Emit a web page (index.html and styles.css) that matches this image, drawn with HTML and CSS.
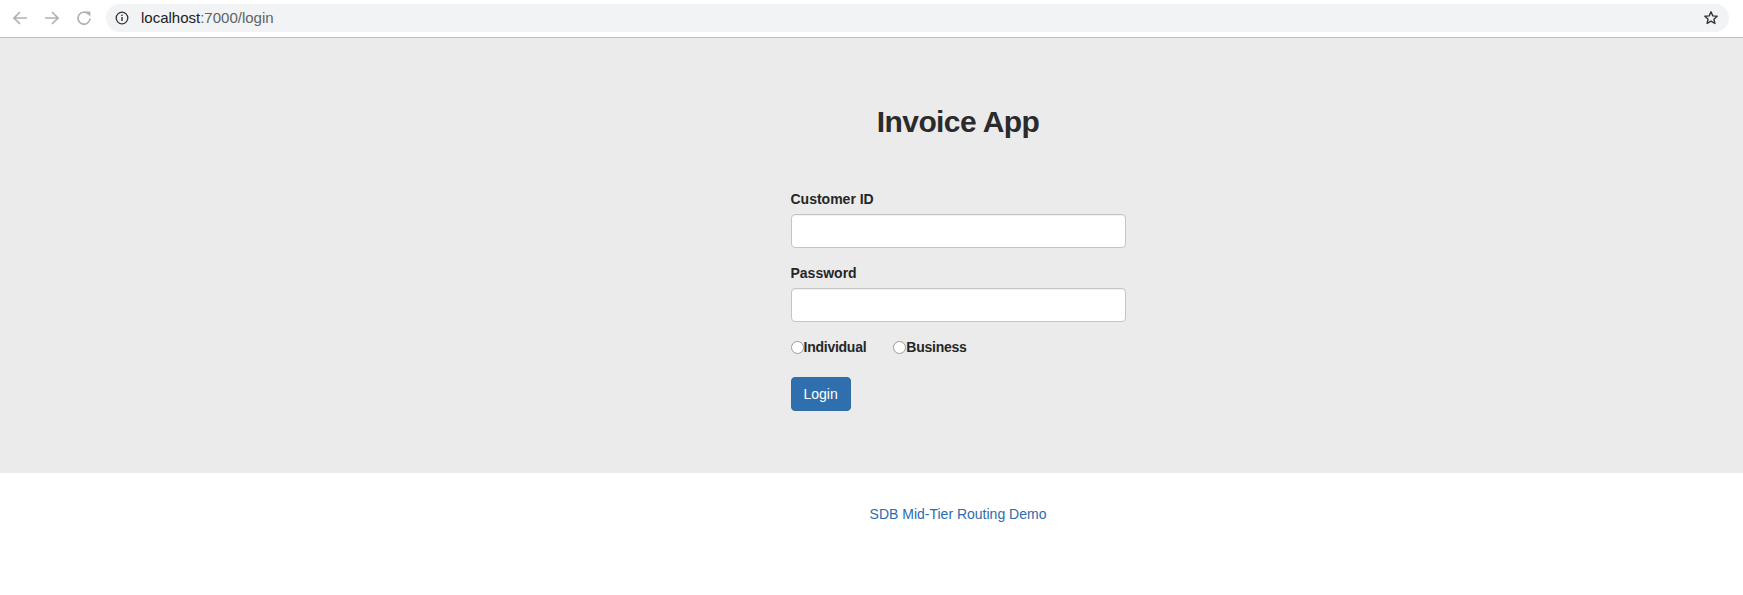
FILE: index.html
```html
<!DOCTYPE html>
<html lang="en">
<head>
<meta charset="utf-8">
<title>Invoice App</title>
<link rel="stylesheet" href="styles.css">
</head>
<body>
<div class="chrome">
  <div class="nav">
    <svg class="nav-icon" width="16" height="16" viewBox="0 0 16 16"><path d="M15 8H2M8 2L2 8l6 6" fill="none" stroke="#aeb1b4" stroke-width="1.7"/></svg>
    <svg class="nav-icon" width="16" height="16" viewBox="0 0 16 16"><path d="M1 8h13M8 2l6 6-6 6" fill="none" stroke="#aeb1b4" stroke-width="1.7"/></svg>
    <svg class="nav-icon" width="16" height="16" viewBox="0 0 16 16"><path d="M14 8.5a6 6 0 1 1-1.8-4.6" fill="none" stroke="#aeb1b4" stroke-width="1.7"/><path d="M9.2 1.6h5.2v5.2z" fill="#aeb1b4"/></svg>
  </div>
  <div class="omnibox">
    <svg class="info" width="14" height="14" viewBox="0 0 14 14"><circle cx="7" cy="7" r="5.8" fill="none" stroke="#333" stroke-width="1.3"/><rect x="6.3" y="6" width="1.4" height="4" fill="#333"/><rect x="6.3" y="3.6" width="1.4" height="1.4" fill="#333"/></svg>
    <span class="url"><span class="host">localhost</span><span class="path">:7000/login</span></span>
    <svg class="star" width="16" height="16" viewBox="0 0 16 16"><path d="M8 1.8l1.8 4.1 4.4.4-3.3 2.9 1 4.3L8 11.2l-3.9 2.3 1-4.3-3.3-2.9 4.4-.4z" fill="none" stroke="#333" stroke-width="1.4" stroke-linejoin="round"/></svg>
  </div>
</div>

<div class="jumbo">
  <div class="center">
    <h2 class="title">Invoice App</h2>
    <form class="login-form">
      <div class="form-group">
        <label class="field-label" for="cid">Customer ID</label>
        <input class="form-control" id="cid" type="text">
      </div>
      <div class="form-group">
        <label class="field-label" for="pwd">Password</label>
        <input class="form-control" id="pwd" type="password">
      </div>
      <div class="radio-row">
        <label class="radio-label"><input class="radio" type="radio" name="type">Individual</label>
        <label class="radio-label"><input class="radio" type="radio" name="type">Business</label>
      </div>
      <button class="btn-primary" type="button">Login</button>
    </form>
  </div>
</div>

<div class="footer">
  <div class="center">
    <a class="footer-link" href="#">SDB Mid-Tier Routing Demo</a>
  </div>
</div>
</body>
</html>
```

FILE: styles.css
```css
* { box-sizing: border-box; }

html, body {
  margin: 0;
  padding: 0;
  background: #fff;
  font-family: "Liberation Sans", Arial, sans-serif;
  font-size: 14px;
  line-height: 20px;
  color: #333;
}

.chrome {
  height: 38px;
  background: #fff;
  border-bottom: 1px solid #bfbfbf;
  display: flex;
  align-items: center;
  padding-bottom: 1px;
}

.nav {
  display: flex;
  align-items: center;
  gap: 16px;
  padding-left: 12px;
  width: 106px;
}

.nav-icon { display: block; }

.omnibox {
  flex: 1;
  margin-right: 14px;
  height: 28px;
  border-radius: 14px;
  background: #f1f3f4;
  display: flex;
  align-items: center;
  padding-left: 9px;
  padding-right: 10px;
}

.info { display: block; margin-right: 12px; }

.url {
  flex: 1;
  font-size: 15px;
  line-height: 20px;
}

.host { color: #202124; }
.path { color: #5f6368; }

.star { display: block; }

.jumbo {
  background: #ebebeb;
  height: 435px;
  padding-top: 67px;
}

.center {
  padding-left: 173px;
  display: flex;
  flex-direction: column;
  align-items: center;
}

.title {
  margin: 0;
  font-size: 30px;
  line-height: 33px;
  font-weight: bold;
  letter-spacing: -0.6px;
  color: #2b2b2b;
}

.login-form {
  width: 335px;
  margin-top: 51px;
  display: flex;
  flex-direction: column;
}

.form-group {
  display: flex;
  flex-direction: column;
  margin-bottom: 15px;
}

.field-label {
  font-weight: bold;
  margin-bottom: 5px;
  color: #262626;
}

.form-control {
  height: 34px;
  width: 100%;
  margin: 0;
  border: 1px solid #c4c4c4;
  border-radius: 4px;
  background: #fff;
  box-shadow: inset 0 1px 1px rgba(0,0,0,0.06);
  font-family: inherit;
  font-size: 14px;
  padding: 6px 12px;
}

.radio-row {
  display: flex;
  align-items: center;
  gap: 27px;
  height: 20px;
  margin-bottom: 20px;
}

.radio-label {
  display: flex;
  align-items: center;
  font-weight: bold;
  letter-spacing: -0.25px;
  color: #262626;
}

.radio {
  appearance: none;
  -webkit-appearance: none;
  width: 13px;
  height: 13px;
  margin: 0;
  border: 1px solid #9c9c9c;
  border-radius: 50%;
  background: #fff;
}

.btn-primary {
  align-self: flex-start;
  width: 60px;
  height: 34px;
  padding: 6px 12px;
  border: 1px solid #2e6da4;
  border-radius: 4px;
  background: #2f6fae;
  color: #fff;
  font-family: inherit;
  font-size: 14px;
  line-height: 20px;
}

.footer {
  padding-top: 31px;
}

.footer-link {
  color: #2e6bb0;
  text-decoration: none;
  font-size: 14px;
  line-height: 20px;
}
```
